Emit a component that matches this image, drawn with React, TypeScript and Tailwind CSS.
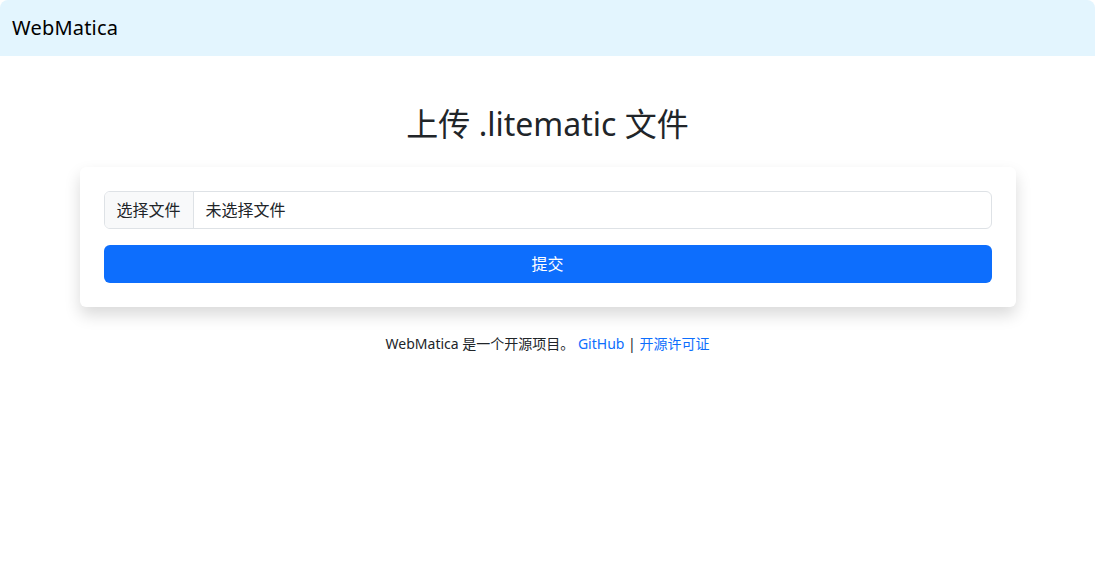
const font = "font-['Segoe_UI','Noto_Sans','Noto_Sans_CJK_SC',sans-serif]";

function NavBar() {
  return (
    <nav className="flex h-14 items-center bg-[#e3f5fe] px-3">
      <a className="text-[20px] leading-[30px] tracking-[0.2px] text-black" href="#">
        WebMatica
      </a>
    </nav>
  );
}

function UploadCard() {
  return (
    <form className="flex flex-col gap-4 rounded-md bg-white p-6 shadow-[0_8px_16px_rgba(0,0,0,0.15)]">
      <label className="flex h-[38px] w-full cursor-pointer overflow-hidden rounded-md border border-[#dee2e6] text-base text-[#212529]">
        <span className="flex items-center border-r border-[#dee2e6] bg-[#f8f9fa] px-3">
          选择文件
        </span>
        <span className="flex items-center px-3">未选择文件</span>
      </label>
      <button
        type="submit"
        className="h-[38px] w-full rounded-md bg-[#0d6efd] text-base text-white"
      >
        提交
      </button>
    </form>
  );
}

export default function App() {
  return (
    <div className={`min-h-[587px] overflow-hidden rounded-lg bg-white ${font}`}>
      <NavBar />
      <main className="mx-auto mt-[49px] w-[936px]">
        <h2 className="mb-6 text-center text-[32px] leading-[38px] text-[#212529]">
          上传 .litematic 文件
        </h2>
        <UploadCard />
        <p className="mt-[26px] text-center text-sm leading-[21px] text-[#212529]">
          WebMatica 是一个开源项目。{" "}
          <a className="text-[#0d6efd]" href="#">
            GitHub
          </a>{" "}
          |{" "}
          <a className="text-[#0d6efd]" href="#">
            开源许可证
          </a>
        </p>
      </main>
    </div>
  );
}
